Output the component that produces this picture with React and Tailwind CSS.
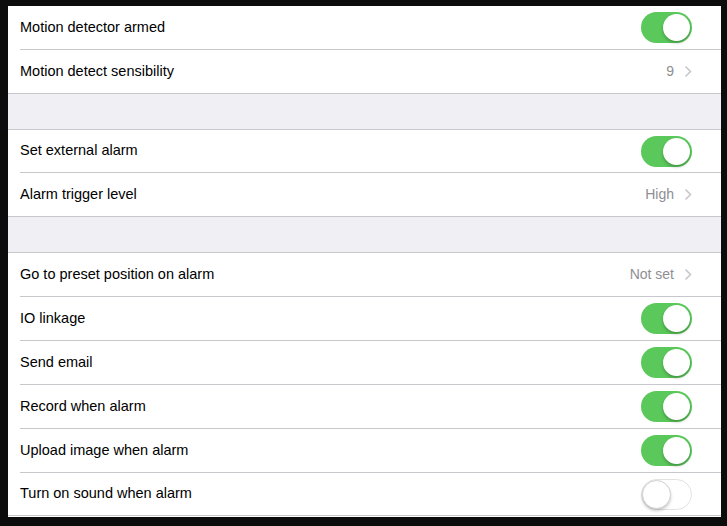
import React from "react";

function Toggle({ on }) {
  return on ? (
    <div className="w-[51px] h-[31px] rounded-full bg-[#5ac85a] relative shrink-0">
      <div className="absolute right-[2px] top-[2px] w-[27px] h-[27px] rounded-full bg-white shadow-[0_2px_3px_rgba(0,0,0,0.25)]" />
    </div>
  ) : (
    <div className="w-[51px] h-[31px] rounded-full bg-white border border-[#e2e2e2] relative shrink-0">
      <div className="absolute left-[0px] top-[0px] w-[29px] h-[29px] rounded-full bg-white border border-[#d0d0d0] shadow-[0_2px_3px_rgba(0,0,0,0.2)]" />
    </div>
  );
}

function Chevron() {
  return (
    <svg width="8" height="13" viewBox="0 0 8 13" className="shrink-0">
      <path d="M1.5 1.5 L6.5 6.5 L1.5 11.5" fill="none" stroke="#c7c7cc" strokeWidth="1.6" />
    </svg>
  );
}

function Row({ label, toggle, value, last, h = "h-[44px]" }) {
  return (
    <div className={`${h} bg-white ${last ? "border-b border-[#c8c7cc]" : "pl-[12px]"}`}>
      <div className={`h-full flex items-center pr-[29px] ${last ? "pl-[12px]" : "border-b border-[#c8c7cc]"}`}>
        <span className="flex-1 text-[14.5px] text-black">{label}</span>
        {toggle !== undefined ? (
          <Toggle on={toggle} />
        ) : (
          <div className="flex items-center gap-[10px]">
            <span className="text-[14px] text-[#8e8e93]">{value}</span>
            <Chevron />
          </div>
        )}
      </div>
    </div>
  );
}

function Gap() {
  return <div className="h-[36px] bg-[#efeff4] border-b border-[#c8c7cc]" />;
}

export default function App() {
  return (
    <div className="w-[727px] h-[526px] bg-[#0c0c0c] pt-[6px] pl-[8px] pr-[6px] overflow-hidden" style={{ fontFamily: '"Liberation Sans", Arial, sans-serif' }}>
      <div className="bg-white h-[511px]">
        <Row label="Motion detector armed" toggle={true} />
        <Row label="Motion detect sensibility" value="9" last />
        <Gap />
        <Row label="Set external alarm" toggle={true} h="h-[43px]" />
        <Row label="Alarm trigger level" value="High" last />
        <Gap />
        <Row label="Go to preset position on alarm" value="Not set" />
        <Row label="IO linkage" toggle={true} />
        <Row label="Send email" toggle={true} />
        <Row label="Record when alarm" toggle={true} />
        <Row label="Upload image when alarm" toggle={true} />
        <Row label="Turn on sound when alarm" toggle={false} last h="h-[43px]" />
      </div>
    </div>
  );
}
